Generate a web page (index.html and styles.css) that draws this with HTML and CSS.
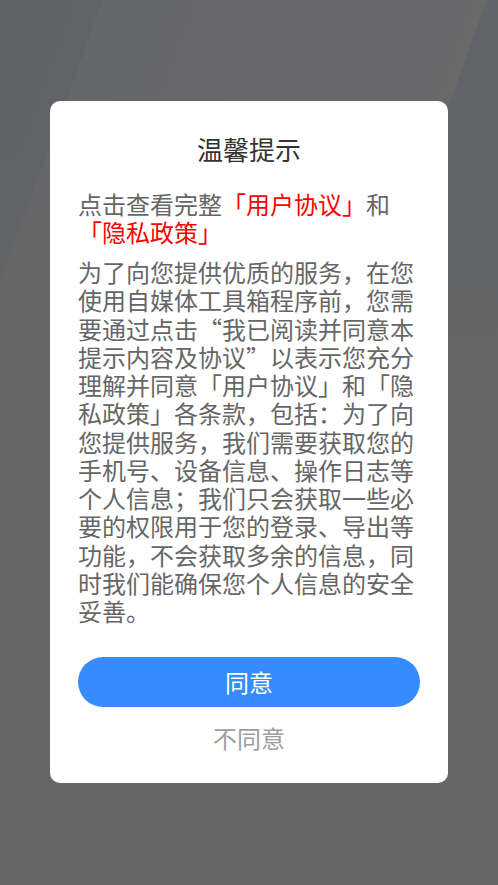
FILE: index.html
```html
<!DOCTYPE html>
<html lang="zh-CN">
<head>
<meta charset="utf-8">
<title>温馨提示</title>
<link rel="stylesheet" href="styles.css">
</head>
<body>
<div class="screen">
  <div class="dialog">
    <h1 class="dialog-title">温馨提示</h1>
    <p class="dialog-intro">点击查看完整<span class="link">「用户协议」</span>和<span class="link">「隐私政策」</span></p>
    <p class="dialog-body">为了向您提供优质的服务，在您使用自媒体工具箱程序前，您需要通过点击“我已阅读并同意本提示内容及协议”以表示您充分理解并同意「用户协议」和「隐私政策」各条款，包括：为了向您提供服务，我们需要获取您的手机号、设备信息、操作日志等个人信息；我们只会获取一些必要的权限用于您的登录、导出等功能，不会获取多余的信息，同时我们能确保您个人信息的安全妥善。</p>
    <div class="dialog-actions">
      <button class="btn-agree" type="button">同意</button>
      <button class="btn-disagree" type="button">不同意</button>
    </div>
  </div>
</div>
</body>
</html>
```

FILE: styles.css
```css
html, body {
  margin: 0;
  padding: 0;
}

body {
  width: 498px;
  height: 885px;
  overflow: hidden;
  font-family: "Noto Sans CJK SC", "Noto Sans", sans-serif;
  background-color: #666666;
  background-image:
    linear-gradient(to bottom, rgba(102, 102, 102, 0) 0, rgba(102, 102, 102, 0) 120px, #666666 360px),
    linear-gradient(110deg, #606266 0, #606367 96px, #666769 97px, #68686a 440px, #6a6a69 457px, #606367 458px, #606367 100%);
  background-repeat: no-repeat;
}

.screen {
  box-sizing: border-box;
  height: 885px;
  padding: 101px 50px 0;
}

.dialog {
  background: #ffffff;
  border-radius: 10px;
  padding: 33px 28px 30px;
  display: flex;
  flex-direction: column;
}

.dialog-title {
  margin: 0;
  font-size: 26px;
  font-weight: normal;
  line-height: 30px;
  color: #333333;
  text-align: center;
}

.dialog-intro {
  margin: 26px 0 0;
  font-size: 24px;
  line-height: 28px;
  color: #666666;
}

.link {
  display: inline-block;
  line-height: 28px;
  vertical-align: top;
  color: #ff0000;
}

.dialog-body {
  margin: 12px 0 0;
  font-size: 24px;
  line-height: 28.25px;
  color: #666666;
}

.dialog-actions {
  margin-top: 32px;
  display: flex;
  flex-direction: column;
  align-items: stretch;
}

.btn-agree {
  height: 50px;
  border: none;
  border-radius: 25px;
  background: #368bff;
  color: #ffffff;
  font-family: inherit;
  font-size: 24px;
  line-height: 30px;
  padding: 0;
}

.btn-disagree {
  margin-top: 16px;
  height: 30px;
  border: none;
  background: transparent;
  color: #9e9e9e;
  font-family: inherit;
  font-size: 24px;
  line-height: 30px;
  padding: 0;
}
```
